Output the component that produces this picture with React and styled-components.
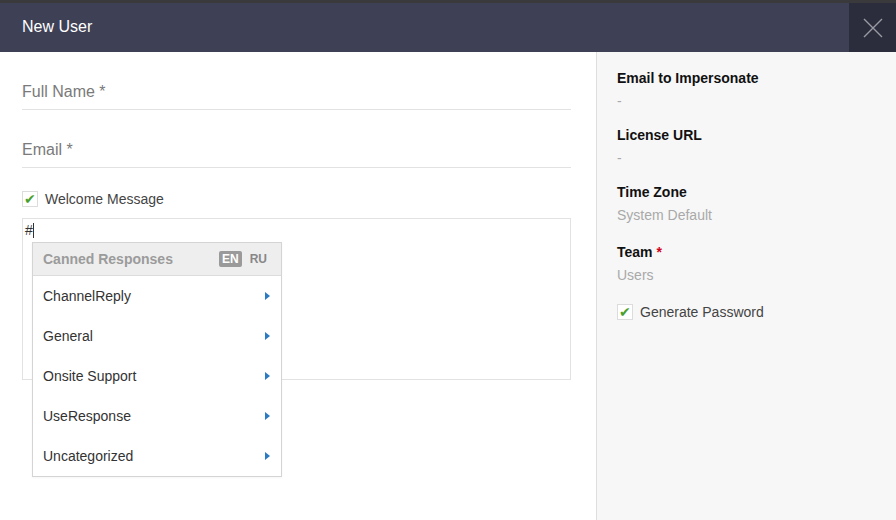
import React from 'react'
import styled, { createGlobalStyle } from 'styled-components'

const GlobalStyle = createGlobalStyle`
  html, body, #root {
    margin: 0;
    height: 100%;
  }
  body {
    font-family: "Liberation Sans", Arial, sans-serif;
    background: #ffffff;
    overflow: hidden;
  }
`

const Dialog = styled.div`
  display: flex;
  flex-direction: column;
  height: 520px;
  border-top: 3px solid #3a3a3c;
  box-sizing: border-box;
`

const Header = styled.header`
  display: flex;
  align-items: stretch;
  height: 49px;
  background: #3e4056;
`

const Title = styled.h1`
  flex: 1;
  margin: 0;
  padding-left: 22px;
  font-size: 16px;
  font-weight: normal;
  line-height: 48px;
  color: #ffffff;
`

const CloseButton = styled.button`
  width: 47px;
  border: 0;
  padding: 0;
  background: #2c2d3c;
  display: flex;
  align-items: center;
  justify-content: center;
  cursor: pointer;
`

const Body = styled.div`
  flex: 1;
  display: flex;
`

const Main = styled.div`
  width: 549px;
  padding: 0 25px 0 22px;
`

const Field = styled.div`
  padding: 29px 0 6px;
  border-bottom: 1px solid #e2e2e2;
  font-size: 16px;
  line-height: 22px;
  color: #7a7a7a;
`

const CheckRow = styled.label`
  display: flex;
  align-items: center;
  gap: 7px;
  margin-top: ${p => p.$top || 0}px;
  height: 16px;
  font-size: 14px;
  color: #444;
`

const Box = styled.span`
  width: 14px;
  height: 14px;
  border: 1px solid #dcdcdc;
  background: #fff;
  display: flex;
  align-items: center;
  justify-content: center;
  color: #47a02b;
  font-size: 14px;
  line-height: 1;
`

const Editor = styled.div`
  position: relative;
  margin-top: 11px;
  height: 154px;
  border: 1px solid #e2e2e2;
  padding: 3px 2px;
  box-sizing: content-box;
  font-size: 14px;
  color: #333;
  line-height: 16px;
`

const Caret = styled.span`
  display: inline-block;
  width: 1px;
  height: 15px;
  background: #333;
  vertical-align: -3px;
`

const Menu = styled.div`
  position: absolute;
  left: 9px;
  top: 23px;
  width: 248px;
  border: 1px solid #d4d4d4;
  background: #fff;
  box-shadow: 0 1px 2px rgba(0,0,0,0.04);
`

const MenuHead = styled.div`
  display: flex;
  align-items: center;
  height: 32px;
  padding: 0 11px 0 10px;
  background: #eeeeee;
  border-bottom: 1px solid #dcdcdc;
  font-size: 14px;
  font-weight: bold;
  color: #9b9b9b;
`

const HeadTitle = styled.span`
  flex: 1;
`

const Lang = styled.span`
  font-size: 12px;
  font-weight: bold;
  line-height: 16px;
  padding: 0 3px;
  margin-left: 5px;
  border-radius: 2px;
  color: ${p => (p.$active ? '#fff' : '#888')};
  background: ${p => (p.$active ? '#9a9a9a' : 'transparent')};
`

const Item = styled.div`
  display: flex;
  align-items: center;
  height: 40px;
  padding: 0 11px 0 10px;
  font-size: 14px;
  color: #333;
`

const ItemText = styled.span`
  flex: 1;
`

const Arrow = styled.span`
  width: 0;
  height: 0;
  border-top: 4px solid transparent;
  border-bottom: 4px solid transparent;
  border-left: 5px solid #2b7bc4;
`

const Side = styled.aside`
  flex: 1;
  background: #f7f7f7;
  border-left: 1px solid #dedede;
  padding: 16px 20px 0 20px;
`

const Group = styled.div`
  margin-bottom: ${p => p.$gap}px;
`

const Label = styled.div`
  font-size: 14px;
  font-weight: bold;
  line-height: 20px;
  color: #111;
`

const Req = styled.span`
  color: #d0021b;
`

const Value = styled.div`
  margin-top: 3px;
  font-size: 14px;
  line-height: 20px;
  color: #a9a9a9;
`

const responses = ['ChannelReply', 'General', 'Onsite Support', 'UseResponse', 'Uncategorized']

export default function App() {
  return (
    <>
      <GlobalStyle />
      <Dialog>
        <Header>
          <Title>New User</Title>
          <CloseButton aria-label="Close">
            <svg width="20" height="20" viewBox="0 0 20 20">
              <path d="M1 1 L19 19 M19 1 L1 19" stroke="#9a9aa4" strokeWidth="1.4" fill="none" />
            </svg>
          </CloseButton>
        </Header>
        <Body>
          <Main>
            <Field>Full Name *</Field>
            <Field>Email *</Field>
            <CheckRow $top={23}>
              <Box>✔</Box>
              Welcome Message
            </CheckRow>
            <Editor>
              #<Caret />
              <Menu>
                <MenuHead>
                  <HeadTitle>Canned Responses</HeadTitle>
                  <Lang $active>EN</Lang>
                  <Lang>RU</Lang>
                </MenuHead>
                {responses.map(r => (
                  <Item key={r}>
                    <ItemText>{r}</ItemText>
                    <Arrow />
                  </Item>
                ))}
              </Menu>
            </Editor>
          </Main>
          <Side>
            <Group $gap={14}>
              <Label>Email to Impersonate</Label>
              <Value>-</Value>
            </Group>
            <Group $gap={14}>
              <Label>License URL</Label>
              <Value>-</Value>
            </Group>
            <Group $gap={17}>
              <Label>Time Zone</Label>
              <Value>System Default</Value>
            </Group>
            <Group $gap={19}>
              <Label>Team <Req>*</Req></Label>
              <Value>Users</Value>
            </Group>
            <CheckRow>
              <Box>✔</Box>
              Generate Password
            </CheckRow>
          </Side>
        </Body>
      </Dialog>
    </>
  )
}
